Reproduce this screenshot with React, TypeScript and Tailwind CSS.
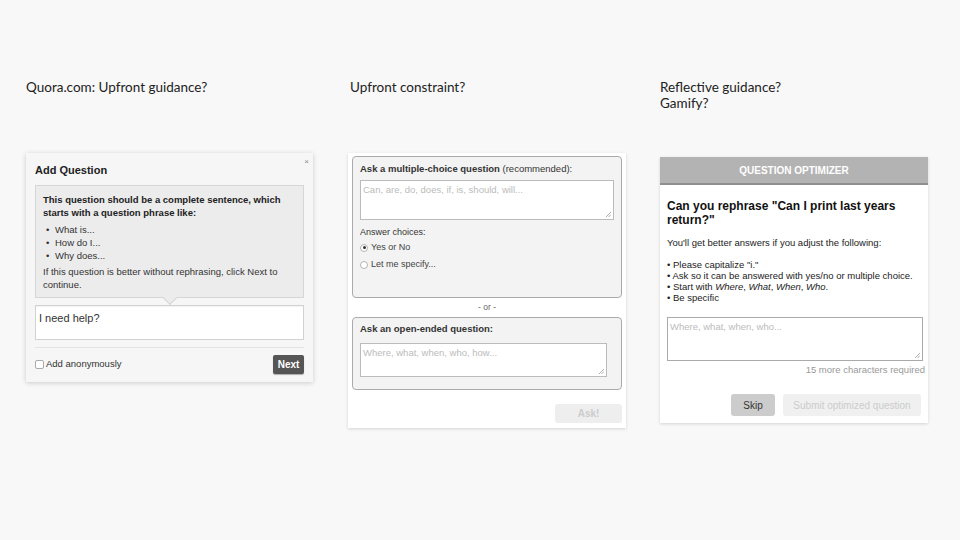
const sans = "[font-family:'Liberation_Sans',Arial,sans-serif]";

function Radio({ checked, label }: { checked?: boolean; label: string }) {
  return (
    <div className="flex items-center gap-[3px] h-[17px]">
      <span className="flex h-[8px] w-[8px] items-center justify-center rounded-full border border-[#b5b5b5] bg-white">
        {checked && <span className="h-[3px] w-[3px] rounded-full bg-[#333]" />}
      </span>
      <span className="text-[9px] text-[#444]">{label}</span>
    </div>
  );
}

function Grip() {
  return (
    <svg className="absolute bottom-[2px] right-[2px]" width="6" height="6" viewBox="0 0 6 6">
      <path d="M1 6L6 1M3.5 6L6 3.5" stroke="#999" strokeWidth="0.8" />
    </svg>
  );
}

function QuoraPanel() {
  return (
    <div className={`relative w-[287px] h-[229px] bg-[#f6f6f6] shadow-[0_1px_5px_rgba(0,0,0,0.18)] px-[9px] pt-[11px] ${sans}`}>
      <span className="absolute right-[4px] top-[3px] text-[8px] text-[#888]">×</span>
      <h3 className="text-[11px] font-bold leading-[12px] text-[#222]">Add Question</h3>
      <div className="relative mt-[9px] h-[113px] border border-[#d6d6d6] bg-[#ececec] px-[7px] pt-[8px] text-[9.5px] text-[#333]">
        <p className="font-bold leading-[12.5px] text-[#222]">
          This question should be a complete sentence, which starts with a question phrase like:
        </p>
        <ul className="mt-[4px] leading-[13px]">
          <li className="flex"><span className="w-[12px] pl-[3px]">•</span>What is...</li>
          <li className="flex"><span className="w-[12px] pl-[3px]">•</span>How do I...</li>
          <li className="flex"><span className="w-[12px] pl-[3px]">•</span>Why does...</li>
        </ul>
        <p className="mt-[3px] leading-[13px]">If this question is better without rephrasing, click Next to continue.</p>
        <span className="absolute -bottom-[6px] left-1/2 h-[10px] w-[10px] -translate-x-1/2 rotate-45 border-b border-r border-[#d6d6d6] bg-[#ececec]" />
      </div>
      <div className="mt-[7px] h-[35px] border border-[#d2d2d2] bg-white px-[3px] pt-[4px] text-[11px] text-[#333] shadow-[inset_0_1px_1px_rgba(0,0,0,0.05)]">
        I need help?
      </div>
      <div className="mt-[7px] border-t border-[#e4e4e4]" />
      <div className="mt-[7px] flex items-center justify-between">
        <label className="flex items-center gap-[2px] text-[9.5px] text-[#333]">
          <span className="h-[9px] w-[9px] rounded-[2px] border border-[#aaa] bg-white" />
          Add anonymously
        </label>
        <button className="h-[19px] w-[31px] rounded-[2px] bg-[#555] text-[10px] font-bold text-white shadow-[0_1px_1px_rgba(0,0,0,0.3)]">
          Next
        </button>
      </div>
    </div>
  );
}

function ConstraintPanel() {
  return (
    <div className={`w-[278px] h-[275px] bg-white shadow-[0_1px_3px_rgba(0,0,0,0.15)] px-[4px] pt-[3px] ${sans}`}>
      <div className="h-[142px] rounded-[4px] border border-[#aaa] bg-[#f3f3f3] px-[7px] pt-[6px]">
        <p className="text-[9.5px] leading-[12px] text-[#333]">
          <span className="font-bold">Ask a multiple-choice question</span> (recommended):
        </p>
        <div className="relative mt-[5px] h-[40px] border border-[#bbb] bg-white px-[2px] pt-[2px] text-[9.5px] text-[#bbb]">
          Can, are, do, does, if, is, should, will...
          <Grip />
        </div>
        <p className="mt-[7px] text-[9px] leading-[11px] text-[#333]">Answer choices:</p>
        <div className="mt-[1px]">
          <Radio checked label="Yes or No" />
          <Radio label="Let me specify..." />
        </div>
      </div>
      <p className="py-[3px] text-center text-[8.5px] leading-[13px] text-[#666]">- or -</p>
      <div className="h-[73px] rounded-[4px] border border-[#aaa] bg-[#f3f3f3] px-[7px] pt-[5px]">
        <p className="text-[9.5px] font-bold leading-[12px] text-[#333]">Ask an open-ended question:</p>
        <div className="relative mt-[8px] mr-[7px] h-[34px] border border-[#bbb] bg-white px-[2px] pt-[2px] text-[9.5px] text-[#bbb]">
          Where, what, when, who, how...
          <Grip />
        </div>
      </div>
      <div className="mt-[14px] flex justify-end">
        <button className="h-[19px] w-[67px] rounded-[3px] bg-[#eeeeee] text-[10px] font-bold text-[#ccc]">Ask!</button>
      </div>
    </div>
  );
}

function OptimizerPanel() {
  return (
    <div className={`w-[268px] h-[266px] bg-white shadow-[0_1px_3px_rgba(0,0,0,0.15)] ${sans}`}>
      <div className="flex h-[28px] items-center justify-center border-b-2 border-[#8f8f8f] bg-[#b3b3b3] text-[10px] font-bold text-white">
        QUESTION OPTIMIZER
      </div>
      <div className="px-[7px] pt-[14px]">
        <h3 className="text-[12px] font-bold leading-[14px] text-[#111]">
          Can you rephrase "Can I print last years return?"
        </h3>
        <p className="mt-[10px] text-[9.5px] leading-[11px] text-[#222]">You'll get better answers if you adjust the following:</p>
        <ul className="mt-[11px] text-[9.5px] leading-[11px] text-[#222]">
          <li>• Please capitalize "i."</li>
          <li>• Ask so it can be answered with yes/no or multiple choice.</li>
          <li>• Start with <i>Where</i>, <i>What</i>, <i>When</i>, <i>Who</i>.</li>
          <li>• Be specific</li>
        </ul>
        <div className="relative mt-[14px] h-[44px] w-[256px] border border-[#aaa] bg-white px-[2px] pt-[2px] text-[9.5px] text-[#bbb]">
          Where, what, when, who...
          <Grip />
        </div>
        <p className="mt-[3px] -mr-[4px] text-right text-[9.5px] leading-[12px] text-[#999]">15 more characters required</p>
        <div className="mt-[18px] flex justify-end gap-[8px]">
          <button className="h-[22px] w-[44px] rounded-[3px] bg-[#cccccc] text-[10px] text-[#333]">Skip</button>
          <button className="h-[22px] w-[138px] rounded-[3px] bg-[#f0f0f0] text-[10px] text-[#ccc]">Submit optimized question</button>
        </div>
      </div>
    </div>
  );
}

export default function App() {
  return (
    <div className="h-[540px] w-[960px] overflow-hidden bg-[#f8f8f8] [font-family:'Lato',sans-serif] text-[13.5px] text-[#222]">
      <div className="flex pl-[26px] pt-[79px]">
        <div className="w-[322px]">
          <div className="h-[74px] leading-[16px]">Quora.com: Upfront guidance?</div>
          <QuoraPanel />
        </div>
        <div className="w-[312px]">
          <div className="h-[74px] pl-[2px] leading-[16px]">Upfront constraint?</div>
          <ConstraintPanel />
        </div>
        <div className="w-[280px]">
          <div className="h-[78px] leading-[16px]">
            Reflective guidance?
            <br />
            Gamify?
          </div>
          <OptimizerPanel />
        </div>
      </div>
    </div>
  );
}
